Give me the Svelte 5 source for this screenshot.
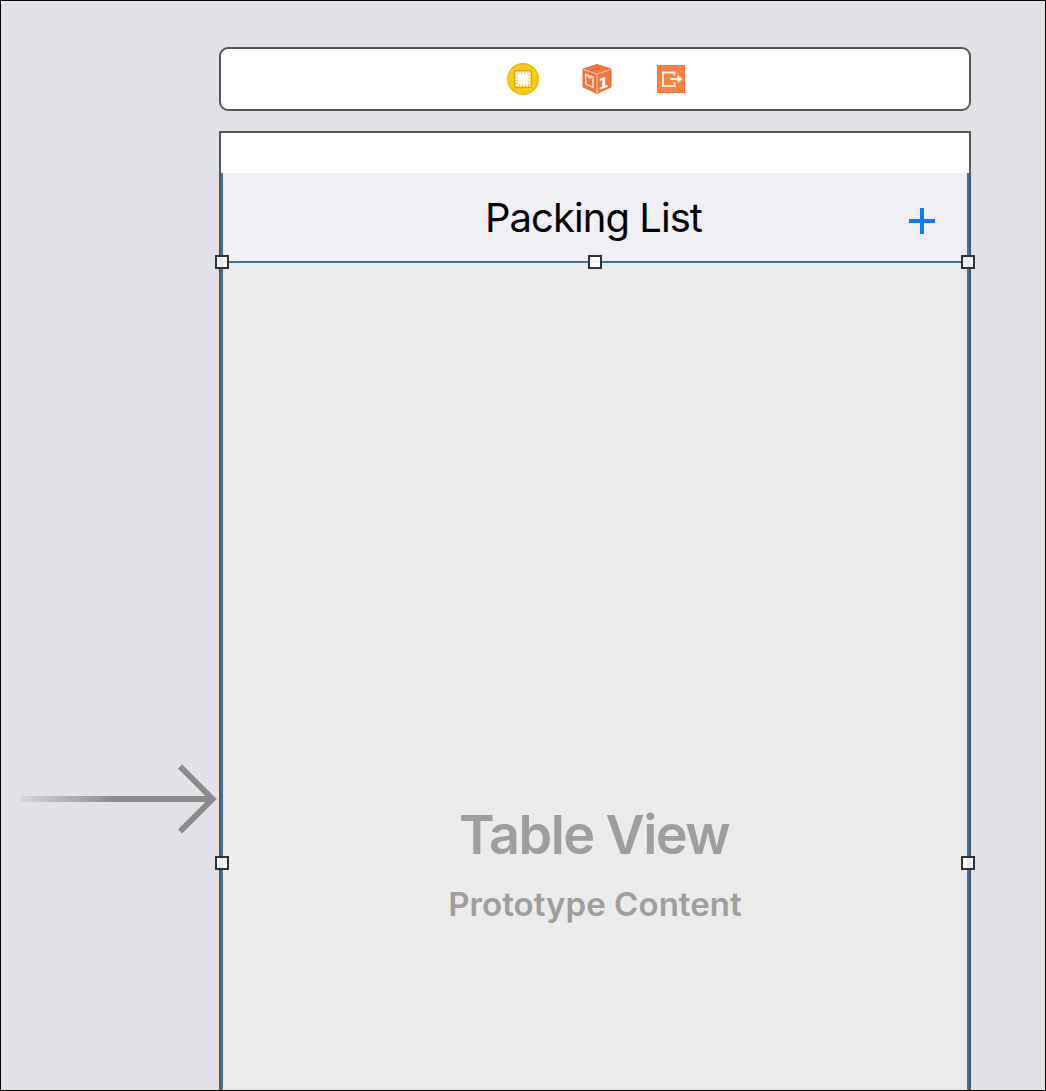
<script lang="ts">
  // Selection handles around the table view, by grid position
  const handles: string[] = ['top left', 'top center', 'top right', 'middle left', 'middle right'];
</script>

<main class="canvas">
  <svg class="entry" width="200" height="72" viewBox="0 0 200 72" aria-hidden="true">
    <defs>
      <linearGradient id="fade" gradientUnits="userSpaceOnUse" x1="0" y1="0" x2="96" y2="0">
        <stop offset="0" stop-color="#8b8b8c" stop-opacity="0.12" />
        <stop offset="1" stop-color="#8b8b8c" />
      </linearGradient>
    </defs>
    <rect x="1" y="33" width="190" height="6" fill="url(#fade)" />
    <path d="M160 3.5L192.500 36L160 68.500" fill="none" stroke="#8b8b8c" stroke-width="6" />
  </svg>

  <div class="scene">
    <header class="dock">
      <svg width="34" height="34" viewBox="0 0 34 34" aria-label="View controller">
        <circle cx="17" cy="17" r="15.300" fill="#fbca16" stroke="#e8b616" stroke-width="1.400" />
        <rect x="8.500" y="8.500" width="17" height="17" rx="1.500" fill="#f3bd10" stroke="#dca60f" />
        <rect x="11.300" y="11.300" width="11.400" height="11.400" fill="#fff" />
        <rect x="10.200" y="10.200" width="13.600" height="13.600" fill="none" stroke="#fff" stroke-width="1.600" stroke-dasharray="2 0.900" />
      </svg>
      <svg width="34" height="34" viewBox="0 0 34 34" aria-label="First responder">
        <path d="M17 2.500L31 7V25L17 31.500L3 25V7Z" fill="#f2773f" stroke="#e36c34" stroke-width="1" stroke-linejoin="round" />
        <path d="M3.500 7.500L17 12L30.500 7.500M17 12V31" fill="none" stroke="#ffc3a5" stroke-width="1.100" />
        <path d="M5.800 12.500L13 15.200V25.200L5.800 22Z" fill="none" stroke="#ffeadd" stroke-width="1.300" />
        <path d="M8 13.500L11.200 14.700V17.200L8 16Z" fill="#ffd2ba" />
        <text class="digit" x="0" y="0" transform="translate(18.200 28.300) skewY(-20)">1</text>
      </svg>
      <svg width="34" height="34" viewBox="0 0 34 34" aria-label="Exit">
        <rect x="3.500" y="3.500" width="27" height="27" fill="#fb8145" stroke="#ee7840" />
        <path d="M20.500 13.500V10.500H9V24H20.500V20.500" fill="none" stroke="#fff3df" stroke-width="2" />
        <path d="M16 17H25" stroke="#fff3df" stroke-width="2.200" />
        <path d="M23.500 12.800L28.500 17L23.500 21.200Z" fill="#fff3df" />
      </svg>
    </header>

    <section class="device">
      <div class="status"></div>
      <div class="body">
        <nav class="navbar">
          <span></span>
          <h1>Packing List</h1>
          <svg class="add" width="26" height="26" viewBox="0 0 26 26" aria-label="Add">
            <path d="M0 13H26M13 0V26" stroke="#0a7aff" stroke-width="4" />
          </svg>
        </nav>
        <div class="table">
          <h2>Table View</h2>
          <p>Prototype Content</p>
        </div>
      </div>
      {#each handles as place}
        <i class="handle {place}"></i>
      {/each}
    </section>
  </div>
</main>

<style>
  :global(body) { margin: 0; }
  .canvas {
    box-sizing: border-box;
    width: 1046px;
    height: 1091px;
    overflow: hidden;
    border: 1px solid #000;
    background: #e1e2e6;
    display: flex;
    font-family: Inter, "Liberation Sans", sans-serif;
  }
  .entry { flex: none; margin: 762px -1px 0 19px; }
  .scene {
    width: 752px;
    flex: none;
    padding-top: 46px;
    display: flex;
    flex-direction: column;
    gap: 20px;
  }
  .dock {
    box-sizing: border-box;
    flex: none;
    height: 64px;
    border: 2px solid #58585a;
    border-radius: 9px;
    background: #fff;
    display: flex;
    align-items: center;
    justify-content: center;
    gap: 40px;
    padding-left: 4px;
  }
  .dock svg { display: block; }
  .digit {
    font: bold 15px "DejaVu Sans", sans-serif;
    font-size: 15px;
    fill: #fff;
  }
  .device {
    position: relative;
    flex: none;
    height: 980px;
    display: flex;
    flex-direction: column;
  }
  .status {
    box-sizing: border-box;
    height: 42px;
    border: 2px solid #58585a;
    border-bottom: 0;
    background: #fff;
  }
  .body {
    flex: 1;
    display: flex;
    flex-direction: column;
    border: solid #4d5865;
    border-width: 0 2px;
  }
  .navbar {
    box-sizing: border-box;
    height: 90px;
    border: solid #3875a2;
    border-width: 0 2px 2px;
    background: #efeff4;
    display: grid;
    grid-template-columns: 1fr auto 1fr;
    align-items: center;
  }
  h1 {
    margin: 1px 0 0 -3px;
    font-size: 40px;
    line-height: 50px;
    font-weight: 400;
    letter-spacing: -0.95px;
    color: #000;
    white-space: nowrap;
  }
  .add { justify-self: end; margin: 8px 32px 0 0; }
  .table {
    flex: 1;
    border: solid #3875a2;
    border-width: 0 2px;
    background: #ebebeb;
    color: #9e9e9e;
    text-align: center;
  }
  h2 {
    margin: 539px 0 0 -2px;
    font-size: 54px;
    line-height: 66px;
    font-weight: 600;
    letter-spacing: -1.6px;
  }
  p {
    margin: 16px 0 0;
    font-size: 33px;
    line-height: 40px;
    font-weight: 600;
    letter-spacing: 0.05px;
  }
  .handle {
    position: absolute;
    box-sizing: border-box;
    width: 14px;
    height: 14px;
    border: 2px solid #333335;
    background: rgba(255, 255, 255, 0.87);
  }
  .top { top: 124px; }
  .middle { top: 725px; }
  .left { left: -4px; }
  .center { left: 369px; }
  .right { right: -4px; }
</style>
